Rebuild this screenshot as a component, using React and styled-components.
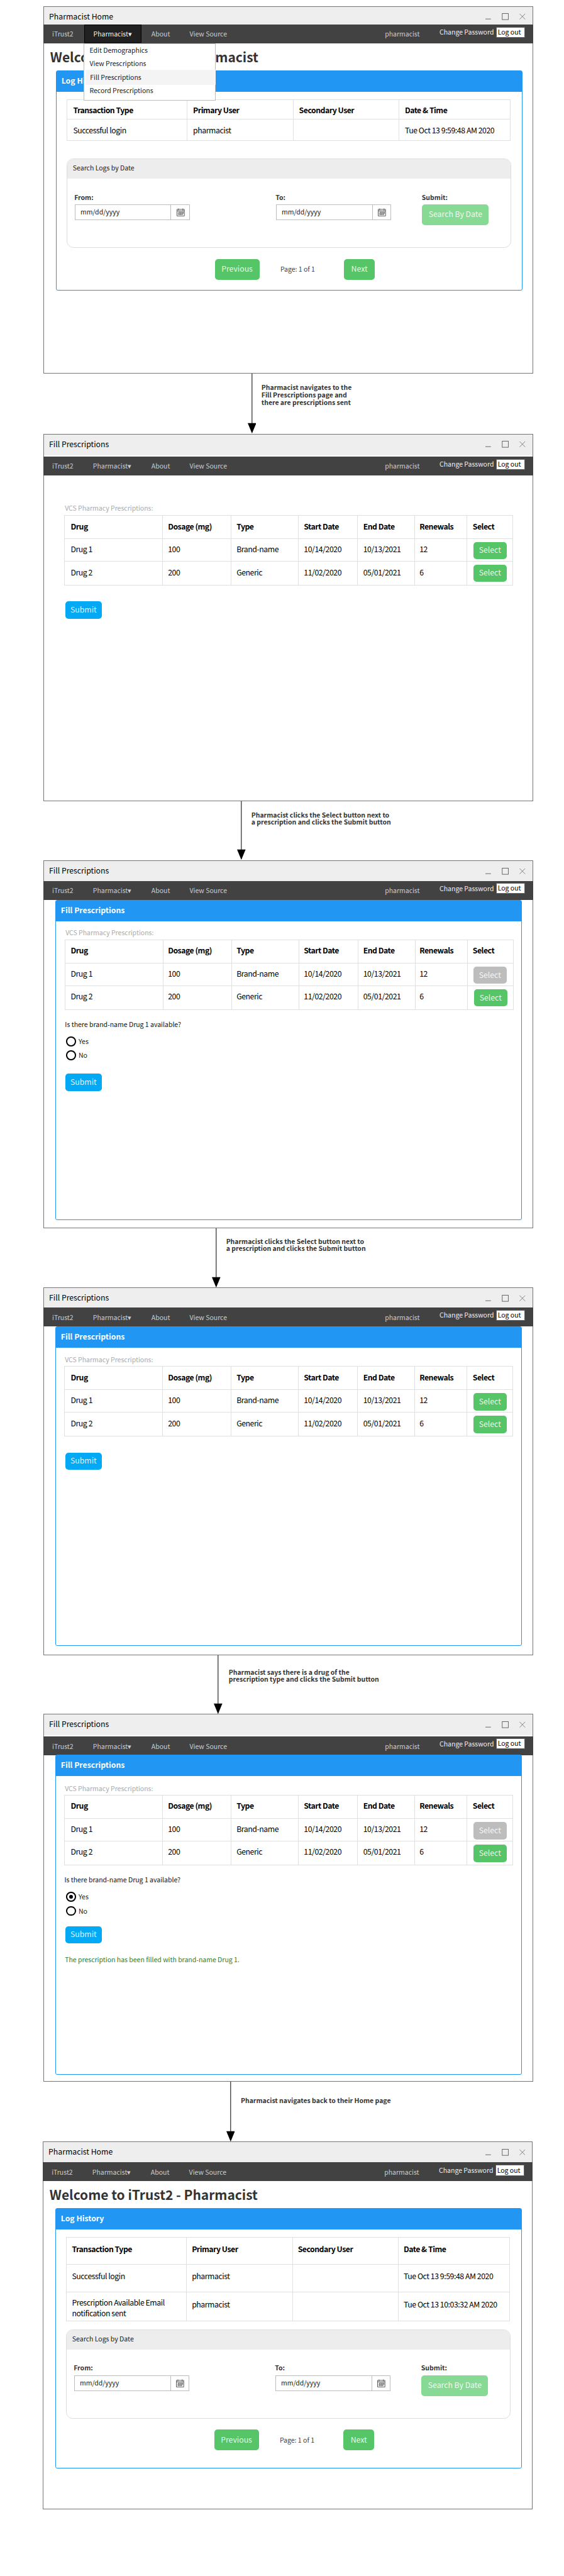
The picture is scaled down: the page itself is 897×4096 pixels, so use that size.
import React from "react";
import styled, { createGlobalStyle, css } from "styled-components";

const GlobalStyle = createGlobalStyle`
  *, *::before, *::after { box-sizing: border-box; }
  body {
    margin: 0;
    background: #fff;
    color: #000;
    font-family: "Noto Sans CJK SC", "Noto Sans", sans-serif;
  }
  #root { overflow: hidden; }
`;

/* Puts the first baseline of a block at y px below its top edge. */
const type = (size, y, spacing = 0, line = 20) => css`
  font-size: ${size}px;
  line-height: ${line}px;
  letter-spacing: ${spacing}px;
  padding-top: ${(y - line / 2 - size * 0.42).toFixed(2)}px;
  white-space: nowrap;
`;

const Page = styled.main`
  zoom: 0.9729;
  width: 922px;
  height: 4210px;
  padding: 10px 0 0 71px;
`;

const Window = styled.section`
  display: flex;
  flex-direction: column;
  width: 801px;
  height: 601px;
  margin-left: ${(p) => p.$shift || 0}px;
  border: 1px solid #757575;
  background: #fff;
`;

const TitleBar = styled.header`
  display: flex;
  justify-content: space-between;
  flex: none;
  height: ${(p) => p.$height}px;
  margin-bottom: ${(p) => p.$gap || 0}px;
  padding: 0 12px 0 8.2px;
  background: #eee;
`;
const Title = styled.h2`
  margin: 0;
  font-weight: 400;
  height: 20px;
  ${type(12.62, 21.5)}
`;
const Controls = styled.svg`
  margin-top: 10px;
  flex: none;
`;

const NavBar = styled.nav`
  position: relative;
  display: grid;
  grid-template-columns: 67px 93px 62px 336.2px 89.3px 92.5px 47px;
  flex: none;
  height: 31px;
  margin: 0 -1px;
  background: #424242;
  color: #ccc;
`;
const NavItem = styled.a`
  height: 31px;
  padding-left: ${(p) => p.$left}px;
  ${type(10.8, 20.2)}
`;
const ActiveItem = styled.a`
  height: 30px;
  border: 1px solid #000;
  background: #212121;
  color: #eee;
  padding-left: 13.6px;
  ${type(10.8, 18.3)}
`;
const Password = styled.a`
  color: #eee;
  ${type(10.8, 17)}
`;
const LogOut = styled.button`
  width: 47px;
  height: 18px;
  margin: ${(p) => p.$top}px 0 0;
  border: 1px solid #616161;
  background: #fff;
  font-family: inherit;
  text-align: left;
  padding: 0 0 0 1.7px;
  font-size: 10.8px;
  line-height: 15px;
  white-space: nowrap;
`;
const Menu = styled.ul`
  position: absolute;
  z-index: 2;
  left: 66px;
  top: 31px;
  width: 216px;
  height: 93px;
  margin: 0;
  padding: 0;
  list-style: none;
  border: 1px solid #bdbdbd;
  background: #fff;
  color: #212121;
`;
const MenuItem = styled.li`
  height: ${(p) => p.$h}px;
  margin: ${(p) => (p.$on ? "0 -1px 0 2px" : 0)};
  padding-left: ${(p) => (p.$on ? 7.2 : 8.4)}px;
  background: ${(p) => (p.$on ? "#f4f4f4" : "transparent")};
  font-size: 10.8px;
  line-height: ${(p) => p.$line}px;
`;

const Heading = styled.h1`
  margin: 0 0 0 10px;
  height: 44px;
  font-weight: 700;
  color: #333;
  ${type(21.5, 30.8)}
`;

const Panel = styled.section`
  position: relative;
  display: flex;
  flex-direction: column;
  flex: none;
  width: 763px;
  height: ${(p) => p.$height}px;
  margin: ${(p) => p.$pull || 0}px 0 0 ${(p) => p.$left}px;
  border: 1px solid #2196f3;
  border-radius: 3px;
`;
const PanelTitle = styled.h3`
  flex: none;
  height: 34px;
  margin: 0;
  padding-left: 8.4px;
  background: #2196f3;
  color: #fff;
  font-weight: 700;
  ${type(12.62, 21.3)}
`;

const Grid = styled.div`
  display: grid;
  flex: none;
  width: ${(p) => p.$width}px;
  margin: ${(p) => p.$top || 0}px 0 0 ${(p) => p.$left}px;
  grid-template-columns: ${(p) => p.$cols};
  grid-template-rows: ${(p) => p.$rows};
  border: solid #e0e0e0;
  border-width: 1px 0 0 1px;
`;
const Cell = styled.div`
  border: solid #e0e0e0;
  border-width: 0 1px 1px 0;
  padding-left: ${(p) => Math.max(p.$left - 0.7, 0)}px;
  font-weight: ${(p) => (p.$head ? 700 : 400)};
  ${(p) => type(12.6, p.$y, p.$head ? -0.5 : -0.44, 18)}
`;

const Button = styled.button`
  flex: none;
  display: block;
  width: ${(p) => p.$w}px;
  height: ${(p) => p.$h || 28}px;
  margin: ${(p) => p.$margin || 0};
  padding: 0 0 1px;
  border: 0;
  border-radius: 5px;
  background: ${(p) => p.$bg || "#56c568"};
  color: rgba(255, 255, 255, 0.88);
  font-family: inherit;
  font-size: 12.62px;
  line-height: 20px;
  letter-spacing: 0;
  white-space: nowrap;
`;

const SearchBox = styled.section`
  flex: none;
  width: 727px;
  height: 146px;
  margin: ${(p) => p.$top}px 0 0 17px;
  border: 1px solid #ddd;
  border-radius: 11px;
  overflow: hidden;
`;
const SearchTitle = styled.h4`
  height: 32px;
  margin: 0;
  padding-left: 9px;
  background: #ededed;
  color: #212121;
  font-weight: 400;
  ${type(10.8, 19)}
`;
const SearchFields = styled.div`
  display: grid;
  grid-template-columns: 329px 239px 109px;
  padding: 23px 0 0 12px;
`;
const FieldLabel = styled.label`
  display: block;
  height: 19px;
  margin-left: -0.6px;
  color: #333;
  font-weight: 700;
  ${type(10.8, 11.6, 0, 14)}
`;
const DateInput = styled.div`
  display: grid;
  grid-template-columns: 157px 29px;
  width: 188px;
  height: 26px;
  border: 1px solid #bdbdbd;
  color: #212121;
`;
const DateText = styled.span`
  padding-left: 8.4px;
  border-right: 1px solid #bdbdbd;
  ${type(10.8, 16, 0, 18)}
`;
const CalendarSvg = styled.svg`
  margin: 5px 0 0 9px;
`;
const Pager = styled.div`
  display: grid;
  grid-template-columns: 107.3px 103.7px 51px;
  padding: 18px 0 0 259px;
`;
const PageCount = styled.span`
  color: #424242;
  ${type(10.8, 21)}
`;

const Caption = styled.p`
  flex: none;
  height: ${(p) => p.$h}px;
  margin: 0 0 0 ${(p) => p.$left}px;
  color: #aaa;
  ${(p) => type(10.8, p.$h - 7)}
`;
const Question = styled.p`
  flex: none;
  height: ${(p) => p.$h}px;
  margin: 0 0 0 ${(p) => p.$left - 0.8}px;
  color: #111;
  ${type(10.8, 28)}
`;
const Option = styled.label`
  display: flex;
  align-items: center;
  gap: 4.5px;
  flex: none;
  height: 16px;
  margin: 0 0 7px ${(p) => p.$left}px;
  color: #212121;
  font-size: 10.8px;
  line-height: 16px;
`;
const Dot = styled.span`
  display: grid;
  place-items: center;
  width: 16px;
  height: 16px;
  border: 2.1px solid #000;
  border-radius: 50%;
  &::after {
    content: "";
    width: 6px;
    height: 6px;
    border-radius: 50%;
    background: ${(p) => (p.$on ? "#000" : "transparent")};
  }
`;
const Message = styled.p`
  margin: 0 0 0 15px;
  color: #2e7d32;
  ${type(10.8, 31)}
`;

const Link = styled.div`
  display: flex;
  height: ${(p) => p.$height}px;
  padding-left: ${(p) => p.$left}px;
`;
const Note = styled.p`
  margin: 0 0 0 ${(p) => p.$left - 0.6}px;
  color: #333;
  font-weight: 700;
  ${(p) => type(10.77, p.$y, 0, 12)}
`;

function WindowControls() {
  return (
    <Controls width="66" height="14" viewBox="0 0 66 14" fill="none" stroke="#666">
      <path d="M1 10.5h9" />
      <rect x="28.5" y="1.5" width="10" height="10" />
      <path d="M57 2l9 9M66 2l-9 9" strokeWidth="0.8" />
    </Controls>
  );
}

function CalendarIcon() {
  return (
    <CalendarSvg width="13" height="14" viewBox="0 0 13 14" fill="none" stroke="#555">
      <path d="M.5 2h12v11H.5zM.5 4.5h12" />
      <path d="M3 .5v3M10 .5v3" />
      <path d="M2.5 6.5h8.5M2 8.5h9M2 10.5h8" strokeWidth="0.8" />
      <path d="M4 6v5.5M6.5 6v5.5M9 6v5.5M11 6v3" strokeWidth="0.8" />
    </CalendarSvg>
  );
}

function Frame({ title, bar = 33, gap = 0, shift, menu, logTop = 4, children }) {
  return (
    <Window $shift={shift}>
      <TitleBar $height={bar} $gap={gap}>
        <Title>{title}</Title>
        <WindowControls />
      </TitleBar>
      <NavBar>
        <NavItem $left={14.4}>iTrust2</NavItem>
        {menu ? <ActiveItem>Pharmacist▾</ActiveItem> : <NavItem $left={13.9}>Pharmacist▾</NavItem>}
        <NavItem $left={16.5}>About</NavItem>
        <NavItem $left={17}>View Source</NavItem>
        <NavItem $left={0}>pharmacist</NavItem>
        <Password>Change Password</Password>
        <LogOut $top={logTop}>Log out</LogOut>
        {menu && (
          <Menu>
            <MenuItem $h={21} $line={20}>Edit Demographics</MenuItem>
            <MenuItem $h={21} $line={21}>View Prescriptions</MenuItem>
            <MenuItem $h={25} $line={25} $on>Fill Prescriptions</MenuItem>
            <MenuItem $h={22} $line={18}>Record Prescriptions</MenuItem>
          </Menu>
        )}
      </NavBar>
      {children}
    </Window>
  );
}

const LOG_HEAD = ["Transaction Type", "Primary User", "Secondary User", "Date & Time"];
const LOG_COLS = "196px 174px 173px 182px";
const LOG_LEFT = [10.3, 10.3, 9.5, 9.5];

function LogTable({ left, top, rows, heights, ys, wrapY, inset = 0 }) {
  return (
    <Grid $width={726} $left={left} $top={top} $cols={LOG_COLS} $rows={heights}>
      {LOG_HEAD.map((h, i) => (
        <Cell key={h} $head $left={LOG_LEFT[i] - inset} $y={ys[0]}>{h}</Cell>
      ))}
      {rows.map((row, r) =>
        row.map((text, i) => (
          <Cell key={r + "-" + i} $left={LOG_LEFT[i] - inset} $y={Array.isArray(text) ? wrapY : ys[r + 1]}>
            {Array.isArray(text) ? <>{text[0]}<br />{text[1]}</> : text}
          </Cell>
        ))
      )}
    </Grid>
  );
}

function SearchForm({ top }) {
  return (
    <SearchBox $top={top}>
      <SearchTitle>Search Logs by Date</SearchTitle>
      <SearchFields>
        {["From:", "To:"].map((label) => (
          <div key={label}>
            <FieldLabel>{label}</FieldLabel>
            <DateInput>
              <DateText>mm/dd/yyyy</DateText>
              <CalendarIcon />
            </DateInput>
          </div>
        ))}
        <div>
          <FieldLabel>Submit:</FieldLabel>
          <Button $w={109} $h={34} $bg="#87da94">Search By Date</Button>
        </div>
      </SearchFields>
    </SearchBox>
  );
}

function Pagination() {
  return (
    <Pager>
      <Button $w={73} $h={34}>Previous</Button>
      <PageCount>Page: 1 of 1</PageCount>
      <Button $w={51} $h={34}>Next</Button>
    </Pager>
  );
}

const DRUG_HEAD = ["Drug", "Dosage (mg)", "Type", "Start Date", "End Date", "Renewals", "Select"];
const DRUGS = [
  ["Drug 1", "100", "Brand-name", "10/14/2020", "10/13/2021", "12"],
  ["Drug 2", "200", "Generic", "11/02/2020", "05/01/2021", "6"],
];
const DRUG_COLS = "160px 112px 110px 97px 93px 86px 75px";
const DRUG_LEFT = [10.3, 9.3, 9.3, 9.5, 9.5, 8.5, 9.5];

function DrugTable({ left, inset = 0, ys, buttons, picked, nudge = 0 }) {
  return (
    <Grid $width={734} $left={left} $cols={DRUG_COLS} $rows="38px 37px 39px">
      {DRUG_HEAD.map((h, i) => (
        <Cell key={h} $head $left={DRUG_LEFT[i] - inset} $y={ys[0]}>{h}</Cell>
      ))}
      {DRUGS.map((row, r) => (
        <React.Fragment key={r}>
          {row.map((text, i) => (
            <Cell key={i} $left={DRUG_LEFT[i] - inset} $y={ys[r + 1]}>{text}</Cell>
          ))}
          <Cell $left={0} $y={14.3}>
            <Button
              $w={54}
              $bg={picked === r ? "#bdbdbd" : undefined}
              $margin={`${buttons[r]}px 0 0 ${10 - inset + (r ? nudge : 0)}px`}
            >
              Select
            </Button>
          </Cell>
        </React.Fragment>
      ))}
    </Grid>
  );
}

function Choices({ left, height, answer, optionLeft = left + 1 }) {
  return (
    <>
      <Question $left={left} $h={height}>Is there brand-name Drug 1 available?</Question>
      <Option $left={optionLeft}><Dot $on={answer === "yes"} />Yes</Option>
      <Option $left={optionLeft}><Dot $on={answer === "no"} />No</Option>
    </>
  );
}

function Connector({ height, left, noteLeft, y, lines }) {
  return (
    <Link $height={height} $left={left}>
      <svg width="14" height={height} viewBox={`0 0 14 ${height}`}>
        <path d={`M7 0V${height - 10}`} stroke="#222" strokeWidth="1.2" />
        <path d={`M0 ${height - 17}h14l-7 17z`} />
      </svg>
      <Note $left={noteLeft} $y={y}>
        {lines.map((line, i) => (
          <React.Fragment key={i}>{i > 0 && <br />}{line}</React.Fragment>
        ))}
      </Note>
    </Link>
  );
}

const LOGIN = ["Successful login", "pharmacist", "", "Tue Oct 13 9:59:48 AM 2020"];
const EMAIL = [["Prescription Available Email", "notification sent"], "pharmacist", "", "Tue Oct 13 10:03:32 AM 2020"];

export default function App() {
  return (
    <>
      <GlobalStyle />
      <Page>
        <Frame title="Pharmacist Home" bar={29} menu>
          <Heading>Welcome to iTrust2 - Pharmacist</Heading>
          <Panel $left={19} $height={360}>
            <PanelTitle>Log History</PanelTitle>
            <LogTable left={17} top={12} heights="32px 35px" rows={[LOGIN]} ys={[22.5, 23.3]} />
            <SearchForm top={29} />
            <Pagination />
          </Panel>
        </Frame>
        <Connector height={98} left={333.7} noteLeft={9.3} y={27} lines={["Pharmacist navigates to the", "Fill Prescriptions page and", "there are prescriptions sent"]} />

        <Frame title="Fill Prescriptions" bar={34} gap={2}>
          <Caption $left={34} $h={65}>VCS Pharmacy Prescriptions:</Caption>
          <DrugTable left={33} ys={[23, 22, 23]} buttons={[5, 5]} />
          <Button $w={59} $bg="#03a9f4" $margin="26px 0 0 35px">Submit</Button>
        </Frame>
        <Connector height={96} left={316.5} noteLeft={10} y={26} lines={["Pharmacist clicks the Select button next to", "a prescription and clicks the Submit button"]} />

        <Frame title="Fill Prescriptions" logTop={3}>
          <Panel $left={18} $height={523}>
            <PanelTitle>Fill Prescriptions</PanelTitle>
            <Caption $left={16} $h={30}>VCS Pharmacy Prescriptions:</Caption>
            <DrugTable left={15} inset={1} ys={[22, 22, 22]} buttons={[5, 5]} picked={0} nudge={1} />
            <Choices left={16} height={43} optionLeft={17} />
            <Button $w={59} $bg="#03a9f4" $margin="15px 0 0 16px">Submit</Button>
          </Panel>
        </Frame>
        <Connector height={97} left={275.8} noteLeft={9.5} y={26} lines={["Pharmacist clicks the Select button next to", "a prescription and clicks the Submit button"]} />

        <Frame title="Fill Prescriptions" bar={32}>
          <Panel $left={18} $height={522}>
            <PanelTitle>Fill Prescriptions</PanelTitle>
            <Caption $left={15} $h={30}>VCS Pharmacy Prescriptions:</Caption>
            <DrugTable left={14} ys={[23, 22, 23]} buttons={[5, 5]} />
            <Button $w={59} $bg="#03a9f4" $margin="26px 0 0 16px">Submit</Button>
          </Panel>
        </Frame>
        <Connector height={96} left={278.7} noteLeft={10.8} y={32} lines={["Pharmacist says there is a drug of the", "prescription type and clicks the Submit button"]} />

        <Frame title="Fill Prescriptions" bar={34} gap={2} logTop={3}>
          <Panel $left={18} $height={523} $pull={-1}>
            <PanelTitle>Fill Prescriptions</PanelTitle>
            <Caption $left={15} $h={31}>VCS Pharmacy Prescriptions:</Caption>
            <DrugTable left={14} ys={[22, 22, 22]} buttons={[5, 5]} picked={0} />
            <Choices left={15} height={43} answer="yes" optionLeft={17} />
            <Button $w={59} $bg="#03a9f4" $margin="10px 0 0 16px">Submit</Button>
            <Message>The prescription has been filled with brand-name Drug 1.</Message>
          </Panel>
        </Frame>
        <Connector height={98} left={298.7} noteLeft={10.6} y={35} lines={["Pharmacist navigates back to their Home page"]} />

        <Frame title="Pharmacist Home" shift={-1}>
          <Heading>Welcome to iTrust2 - Pharmacist</Heading>
          <Panel $left={19} $height={425}>
            <PanelTitle>Log History</PanelTitle>
            <LogTable
              left={17}
              top={12}
              inset={1}
              heights="44px 46px 47px"
              rows={[LOGIN, EMAIL]}
              ys={[25, 25, 25]}
              wrapY={22}
            />
            <SearchForm top={13} />
            <Pagination />
          </Panel>
        </Frame>
      </Page>
    </>
  );
}
